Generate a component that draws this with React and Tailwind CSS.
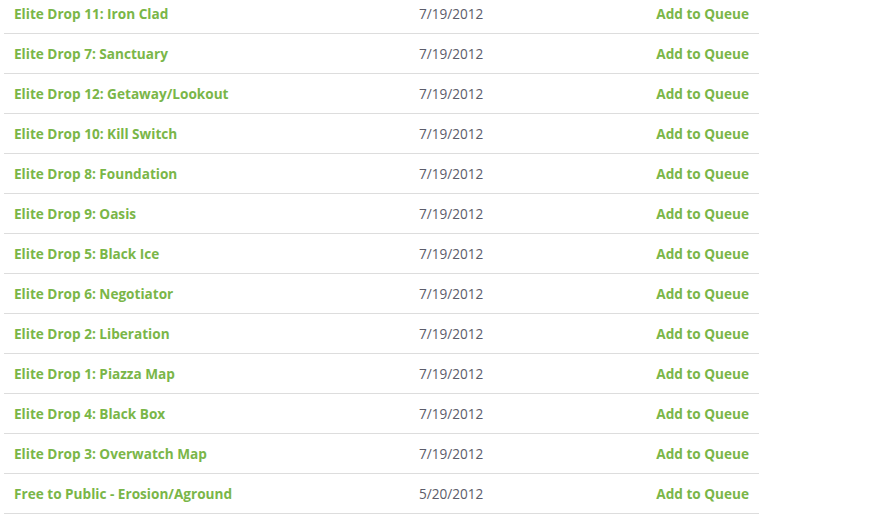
const drops = [
  ["Elite Drop 11: Iron Clad", "7/19/2012"],
  ["Elite Drop 7: Sanctuary", "7/19/2012"],
  ["Elite Drop 12: Getaway/Lookout", "7/19/2012"],
  ["Elite Drop 10: Kill Switch", "7/19/2012"],
  ["Elite Drop 8: Foundation", "7/19/2012"],
  ["Elite Drop 9: Oasis", "7/19/2012"],
  ["Elite Drop 5: Black Ice", "7/19/2012"],
  ["Elite Drop 6: Negotiator", "7/19/2012"],
  ["Elite Drop 2: Liberation", "7/19/2012"],
  ["Elite Drop 1: Piazza Map", "7/19/2012"],
  ["Elite Drop 4: Black Box", "7/19/2012"],
  ["Elite Drop 3: Overwatch Map", "7/19/2012"],
  ["Free to Public - Erosion/Aground", "5/20/2012"],
];

const App = () => {
  return (
    <div className="h-[517px] w-[877px] overflow-hidden bg-white font-['Open_Sans',sans-serif] text-[13.6px]">
      <div className="ml-[4px] mt-[-6px] w-[755px]">
        {drops.map(([title, date]) => (
          <div
            key={title}
            className="flex h-[40px] items-center border-b border-[#dddddd] px-[10px] pt-[1px]"
          >
            <a className="w-[405px] font-bold text-[#7ab648]">{title}</a>
            <span className="flex-1 text-[#5c5c6a]">{date}</span>
            <a className="font-bold text-[#7ab648]">Add to Queue</a>
          </div>
        ))}
      </div>
    </div>
  );
};

export default App;
